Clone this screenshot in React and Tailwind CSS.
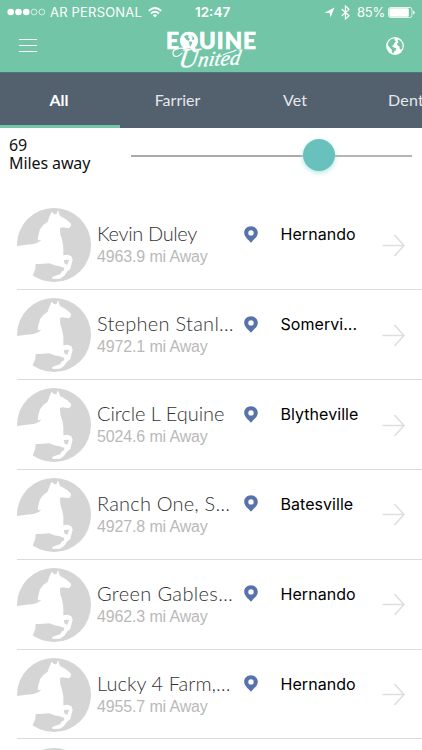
import React from "react";

const people = [
  { name: "Kevin Duley", nameTracking: "tracking-[-0.35px]", miles: "4963.9", city: "Hernando" },
  { name: "Stephen Stanl…", nameTracking: "tracking-[0.27px]", miles: "4972.1", city: "Somervi..." },
  { name: "Circle L Equine", nameTracking: "tracking-[-0.05px]", miles: "5024.6", city: "Blytheville" },
  { name: "Ranch One, S…", nameTracking: "tracking-[0.2px]", miles: "4927.8", city: "Batesville" },
  { name: "Green Gables…", nameTracking: "tracking-[0.35px]", miles: "4962.3", city: "Hernando" },
  { name: "Lucky 4 Farm,…", nameTracking: "tracking-[0.05px]", miles: "4955.7", city: "Hernando" },
  { name: "", nameTracking: "", miles: "", city: "" },
];

function Horse() {
  return (
    <svg viewBox="22 24 222 222" className="h-[74px] w-[74px] shrink-0">
      <circle cx="133" cy="135" r="111" fill="#d5d5d5" />
      <path
        fill="#fff"
        d="M126 35L134 43L140 43L145 31L151 48L161 53L172 60L184 71L184 78L178 85L168 83L158 82L151 84L152 103L158 123L161 140L161 166L174 164L185 169L189 179L185 194L182 207L172 215L163 228L151 236L129 237L127 232L137 227L151 223L157 214L164 211L163 203L150 199L134 196L119 190L101 191L78 192L77 207L68 228L0 220L0 138L22 138L50 134L72 132L86 127L96 119L84 121L86 106L91 88L101 75L114 65L119 50Z"
      />
      <path d="M163 180L178 179L173 195L164 190Z" fill="#d5d5d5" />
    </svg>
  );
}

function Pin() {
  return (
    <svg viewBox="0 0 14 17" className="h-[17px] w-[14px]">
      <path fillRule="evenodd" fill="#5873ab" d="M7 .3C3 .3.2 3.200.2 6.700C.2 10.800 4 13.200 7 16.700C10 13.200 13.800 10.800 13.800 6.700C13.800 3.200 11 .3 7 .3ZM7 4.200A2.700 2.700 0 1 1 7 9.600A2.700 2.700 0 1 1 7 4.200Z" />
    </svg>
  );
}

function Row({ person }) {
  return (
    <div className="ml-[17px] flex h-[89.92px] shrink-0 items-center border-b border-[#dcdcdc] pt-[1.5px]">
      <Horse />
      {person.name && (
        <>
          <div className="mb-px ml-1.5 w-[147px] shrink-0 whitespace-nowrap">
            <div className={`font-['Lato',sans-serif] text-[20px] font-light leading-6 text-[#333] ${person.nameTracking}`}>{person.name}</div>
            <div className="font-['Liberation_Sans',sans-serif] text-[16px] leading-[23px] tracking-[-0.14px] text-[#b9b9b9]">{person.miles} mi Away</div>
          </div>
          <div className="mb-[22px] flex items-center">
            <Pin />
            <span className="ml-[22.5px] w-[101.5px] whitespace-nowrap font-['Inter',sans-serif] text-[16px] leading-5 tracking-[0.05px] text-black">{person.city}</span>
          </div>
          <svg viewBox="0 0 23 23" className="h-[23px] w-[23px]" fill="none" stroke="#dedede" strokeWidth="1.600">
            <path d="M.5 11.500H22M12.500 1L22 11.500L12.500 22" />
          </svg>
        </>
      )}
    </div>
  );
}

function Globe() {
  return (
    <svg viewBox="0 0 18 18" className="h-[18px] w-[18px]">
      <circle cx="9" cy="9" r="8.900" fill="#fff" />
      <path fill="#72c5a7" d="M6 1.800L9 1.400L8.300 3.100L10.200 4.200L8.500 5.700L8 7.500L6 9L7.500 10.300L10.400 11.400L9.700 13.400L8 14.500L7.500 16.400L6 15.600L5.700 12.800L3.700 10.500L1.800 8.200L2.300 5.500L4 3ZM12.500 2.500L15 4.300L16.400 7L16.600 10.500L15.200 13L13.700 11.500L13.500 9.500L11.500 8.500L11.200 6.500L12.600 5L11.500 3.800Z" />
    </svg>
  );
}

function StatusBar() {
  return (
    <div className="flex h-6 items-center font-['Inter',sans-serif] text-[13px] leading-6 text-white">
      <svg viewBox="0 0 38 8" className="ml-[7px] h-2 w-[38px]" fill="#fff">
        <circle cx="3.700" cy="4" r="3.300" />
        <circle cx="11.500" cy="4" r="3.300" />
        <circle cx="19.300" cy="4" r="3.300" />
        <g fill="none" stroke="#fff" strokeWidth=".7">
          <circle cx="27.100" cy="4" r="2.900" />
          <circle cx="34.900" cy="4" r="2.900" />
        </g>
      </svg>
      <span className="ml-[5px] w-[98px] whitespace-nowrap tracking-[0.2px]">AR PERSONAL</span>
      <svg viewBox="0 0 14 11" className="h-[11px] w-[14px]" fill="none" stroke="#fff" strokeWidth="1.800">
        <path d="M.7 3.800Q7-1.800 13.300 3.800M3 6.500Q7 3 11 6.500" />
        <path d="M4.800 8.300Q7 6.300 9.200 8.300L7 10.600Z" fill="#fff" stroke="none" />
      </svg>
      <span className="ml-[33px] w-[129px] whitespace-nowrap text-[13.5px] font-semibold">12:47</span>
      <svg viewBox="0 0 11 11" className="h-[11px] w-[11px]">
        <path d="M.5 5.800L10.500.5L6.500 10.500L5.700 5.900Z" fill="#fff" />
      </svg>
      <svg viewBox="0 0 9 15" className="ml-[6px] h-[15px] w-[9px]" fill="none" stroke="#fff" strokeWidth="1.200">
        <path d="M.7 4L8 10.700L4.400 14V1L8 4.300L.7 11" />
      </svg>
      <span className="ml-[7px] w-[31px] whitespace-nowrap tracking-[-0.2px]">85%</span>
      <svg viewBox="0 0 27 11" className="h-[11px] w-[27px]">
        <rect x=".5" y=".5" width="23.500" height="10" rx="2" fill="none" stroke="#fff" strokeWidth=".8" />
        <rect x="1.300" y="1.300" width="19.500" height="8.400" rx="1" fill="#fff" />
        <path d="M25.200 3.600Q26.700 4 26.700 5.500Q26.700 7 25.200 7.400Z" fill="#fff" />
      </svg>
    </div>
  );
}

function Logo() {
  return (
    <div className="relative h-11 w-[92px] text-white">
      <div className="absolute left-0 top-[3px] whitespace-nowrap font-['Lato',sans-serif] text-[22.5px] font-black leading-6 tracking-[1.05px] [-webkit-text-stroke:0.7px_#fff]">EQUINE</div>
      <svg viewBox="0 0 18 18" className="absolute left-[14px] top-[6px] h-[18px] w-[18px]">
        <circle cx="9" cy="9" r="8.700" fill="#fff" />
        <path fill="#72c5a7" d="M4 4.500L6.500 3L9 3.600L8 5.500L10 7L8.400 9L6.500 7.800L5 6ZM9.300 9L12.200 10L11.700 12L10 15L9.300 12ZM10.700 3L14 5.500L14.200 8L12 7.500L12.500 5.500Z" />
      </svg>
      <div className="absolute left-[13px] top-[19px] -rotate-3 -skew-x-12 whitespace-nowrap font-['Liberation_Serif',serif] text-[21px] italic leading-6 tracking-[0.1px] [-webkit-text-stroke:0.3px_#fff] [text-shadow:0_0_1px_#72c5a7,0_-1px_0_#72c5a7]"><span className="text-[27px]">U</span>nited</div>
      <svg viewBox="0 0 92 44" className="absolute left-0 top-0 h-11 w-[92px]" fill="none" stroke="#fff" strokeWidth="1.100" strokeLinecap="round">
        <path d="M23 24C15 20 6 23 7 28C8 32 13 31 16 27M57 29C62 26 66 27 70 24" />
      </svg>
    </div>
  );
}

export default function App() {
  return (
    <div className="flex h-[750px] w-[422px] flex-col overflow-hidden bg-white">
      <header className="h-[72px] shrink-0 bg-[#72c5a7]">
        <StatusBar />
        <div className="flex h-12 items-start">
          <div className="ml-[19px] mt-[15px] flex w-[18px] flex-col gap-[5px]">
            <i className="h-px bg-white" />
            <i className="h-px bg-white" />
            <i className="h-px bg-white" />
          </div>
          <div className="ml-[129px] mt-0.5"><Logo /></div>
          <div className="ml-[128px] mt-[13px]"><Globe /></div>
        </div>
      </header>
      <nav className="flex h-14 shrink-0 overflow-hidden border-t border-[#4b7777] bg-[#53606e] text-center font-['Lato',sans-serif] text-[16px] leading-[54px] text-[#e5e8eb]">
        <div className="w-[120px] shrink-0 border-b-[3px] border-[#72c5a7] pr-[2px] font-bold text-white">All</div>
        <div className="w-[115px] shrink-0">Farrier</div>
        <div className="w-[120px] shrink-0">Vet</div>
        <div className="ml-[33px] shrink-0 tracking-[0.2px]">Dentist</div>
      </nav>
      <section className="flex h-[72px] shrink-0">
        <div className="ml-[9px] mt-2 w-[122px] whitespace-nowrap font-['Noto_Sans',sans-serif] text-[16px] leading-[18px] tracking-[-0.1px] text-[#111]">
          <div>69</div>
          <div>Miles away</div>
        </div>
        <div className="mt-[11px] flex h-8 w-[281px] items-center">
          <div className="mt-px h-[2px] w-[172px] bg-[#aaa]" />
          <div className="h-8 w-8 rounded-full bg-[#69c1be] shadow-[0_2px_5px_#b8e4e4]" />
          <div className="mt-px h-[2px] flex-1 bg-[#b5b5b5]" />
        </div>
      </section>
      <main className="flex flex-col">
        {people.map((person, i) => <Row key={i} person={person} />)}
      </main>
    </div>
  );
}
